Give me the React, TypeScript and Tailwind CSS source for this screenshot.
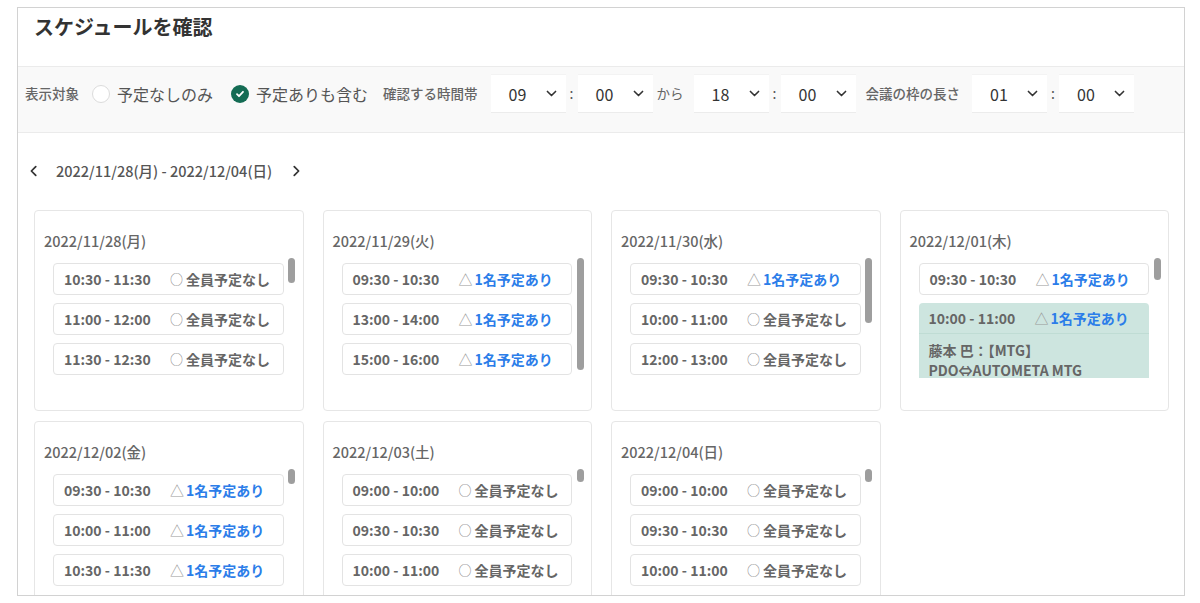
import React from 'react';

type Slot = {
  time: string;
  busy: boolean;
  detail?: string[];
};

type Day = {
  date: string;
  slots: Slot[];
  thumb: number;
};

const days: Day[] = [
  {
    date: '2022/11/28(月)',
    thumb: 25,
    slots: [
      { time: '10:30 - 11:30', busy: false },
      { time: '11:00 - 12:00', busy: false },
      { time: '11:30 - 12:30', busy: false },
    ],
  },
  {
    date: '2022/11/29(火)',
    thumb: 112,
    slots: [
      { time: '09:30 - 10:30', busy: true },
      { time: '13:00 - 14:00', busy: true },
      { time: '15:00 - 16:00', busy: true },
    ],
  },
  {
    date: '2022/11/30(水)',
    thumb: 65,
    slots: [
      { time: '09:30 - 10:30', busy: true },
      { time: '10:00 - 11:00', busy: false },
      { time: '12:00 - 13:00', busy: false },
    ],
  },
  {
    date: '2022/12/01(木)',
    thumb: 22,
    slots: [
      { time: '09:30 - 10:30', busy: true },
      { time: '10:00 - 11:00', busy: true, detail: ['藤本 巴：【MTG】', 'PDO⇔AUTOMETA MTG'] },
    ],
  },
  {
    date: '2022/12/02(金)',
    thumb: 15,
    slots: [
      { time: '09:30 - 10:30', busy: true },
      { time: '10:00 - 11:00', busy: true },
      { time: '10:30 - 11:30', busy: true },
    ],
  },
  {
    date: '2022/12/03(土)',
    thumb: 13,
    slots: [
      { time: '09:00 - 10:00', busy: false },
      { time: '09:30 - 10:30', busy: false },
      { time: '10:00 - 11:00', busy: false },
    ],
  },
  {
    date: '2022/12/04(日)',
    thumb: 13,
    slots: [
      { time: '09:00 - 10:00', busy: false },
      { time: '09:30 - 10:30', busy: false },
      { time: '10:00 - 11:00', busy: false },
    ],
  },
];

function Chevron({ dir, size = 13 }: { dir: 'down' | 'left' | 'right'; size?: number }) {
  const d =
    dir === 'down' ? 'M3 5.5l5 5 5-5' : dir === 'left' ? 'M10 3L5 8l5 5' : 'M6 3l5 5-5 5';
  return (
    <svg width={size} height={size} viewBox="0 0 16 16" fill="none">
      <path d={d} stroke="#333" strokeWidth="2" strokeLinecap="round" strokeLinejoin="round" />
    </svg>
  );
}

function TimeSelect({ value }: { value: string }) {
  return (
    <div className="w-[75px] h-[39px] bg-white border-t border-b border-[#ececec] border-t-[#f3f3f3] flex items-center justify-between pl-[18px] pr-[8px]">
      <span className="text-[16px] text-[#333]">{value}</span>
      <Chevron dir="down" />
    </div>
  );
}

function Colon() {
  return <span className="w-[12px] text-center text-[14px] text-[#555]">:</span>;
}

function SlotRow({ slot }: { slot: Slot }) {
  const expanded = !!slot.detail;
  return (
    <div
      className={
        expanded
          ? 'rounded-[4px] bg-[#cde5df] shrink-0'
          : 'rounded-[4px] border border-[#e3e3e3] bg-white shrink-0'
      }
    >
      <div className={'flex items-center pl-[10px] ' + (expanded ? 'h-[31px] border-b border-[#bfdcd4]' : 'h-[30px]')}>
        <span className="w-[106px] text-[14px] font-bold text-[#666]">{slot.time}</span>
        {slot.busy ? (
          <span className="flex items-center text-[14px] font-bold">
            <span className="mr-[2px] font-normal text-[#999]">△</span>
            <span className="text-[#2b7de9]">1名予定あり</span>
          </span>
        ) : (
          <span className="flex items-center text-[14px] font-bold text-[#666]">
            <span className="mr-[3px] text-[13px] font-normal text-[#888]">○</span>
            <span>全員予定なし</span>
          </span>
        )}
      </div>
      {expanded && (
        <div className="pl-[10px] pt-[6px] pb-[8px] text-[14px] font-bold leading-[20px] text-[#666]">
          {slot.detail!.map((line) => (
            <div key={line}>{line}</div>
          ))}
        </div>
      )}
    </div>
  );
}

function DayCard({ day }: { day: Day }) {
  return (
    <div className="h-[201px] border border-[#e6e6e6] rounded-[4px] bg-white pl-[9px] pr-[4px] pt-[20px]">
      <div className="text-[14.5px] font-medium leading-[20px] text-[#666]">{day.date}</div>
      <div className="mt-[7px] flex h-[120px]">
        <div className="flex-1 overflow-hidden pl-[9px] pt-[5px] flex flex-col gap-[8px]">
          {day.slots.map((s) => (
            <SlotRow key={s.time} slot={s} />
          ))}
        </div>
        <div className="w-[15px] flex justify-center pl-[1px]">
          <div className="w-[7px] rounded-full bg-[#9e9e9e]" style={{ height: day.thumb }} />
        </div>
      </div>
    </div>
  );
}

export default function App() {
  return (
    <div
      className="w-[1200px] h-[603px] bg-white pt-[7px] pl-[17px]"
      style={{ fontFamily: '"Noto Sans CJK JP", "Noto Sans", sans-serif' }}
    >
      <div className="w-[1168px] h-[589px] border border-[#d2d2d2] overflow-hidden">
        {/* header */}
        <div className="h-[59px] border-b border-[#ebebeb] pl-[16px] pt-[5px]">
          <h1 className="text-[20px] font-bold leading-[28px] text-[#333]">スケジュールを確認</h1>
        </div>

        {/* filters */}
        <div className="h-[66px] bg-[#f9f9f9] border-b border-[#ebebeb] flex items-center pl-[7px] pb-[12px]">
          <span className="text-[13.5px] font-medium text-[#666]">表示対象</span>
          <span className="ml-[13px] w-[18px] h-[18px] rounded-full border border-[#dcdcdc] bg-white" />
          <span className="ml-[7px] text-[16px] text-[#555]">予定なしのみ</span>
          <span className="ml-[18px] w-[18px] h-[18px] rounded-full bg-[#146c54] flex items-center justify-center">
            <svg width="10" height="10" viewBox="0 0 10 10" fill="none">
              <path d="M2 5.2l2 2 4-4.4" stroke="#fff" strokeWidth="1.8" strokeLinecap="round" strokeLinejoin="round" />
            </svg>
          </span>
          <span className="ml-[7px] text-[16px] text-[#555]">予定ありも含む</span>
          <span className="ml-[15px] text-[13.5px] font-medium text-[#666]">確認する時間帯</span>
          <div className="ml-[13px] flex items-center">
            <TimeSelect value="09" />
            <Colon />
            <TimeSelect value="00" />
            <span className="ml-[4px] w-[37px] text-[13.5px] text-[#666]">から</span>
            <TimeSelect value="18" />
            <Colon />
            <TimeSelect value="00" />
          </div>
          <span className="ml-[10px] text-[13.5px] font-medium text-[#666]">会議の枠の長さ</span>
          <div className="ml-[12px] flex items-center">
            <TimeSelect value="01" />
            <Colon />
            <TimeSelect value="00" />
          </div>
        </div>

        {/* week navigation */}
        <div className="h-[77px] flex items-center pl-[9px] pb-[1px]">
          <Chevron dir="left" size={14} />
          <span className="ml-[15px] text-[14.5px] font-medium text-[#555]">2022/11/28(月) - 2022/12/04(日)</span>
          <span className="ml-[17px]">
            <Chevron dir="right" size={14} />
          </span>
        </div>

        {/* days */}
        <div className="pl-[16px] pr-[15px] grid grid-cols-4 gap-x-[19px] gap-y-[10px]">
          {days.map((d) => (
            <DayCard key={d.date} day={d} />
          ))}
        </div>
      </div>
    </div>
  );
}
